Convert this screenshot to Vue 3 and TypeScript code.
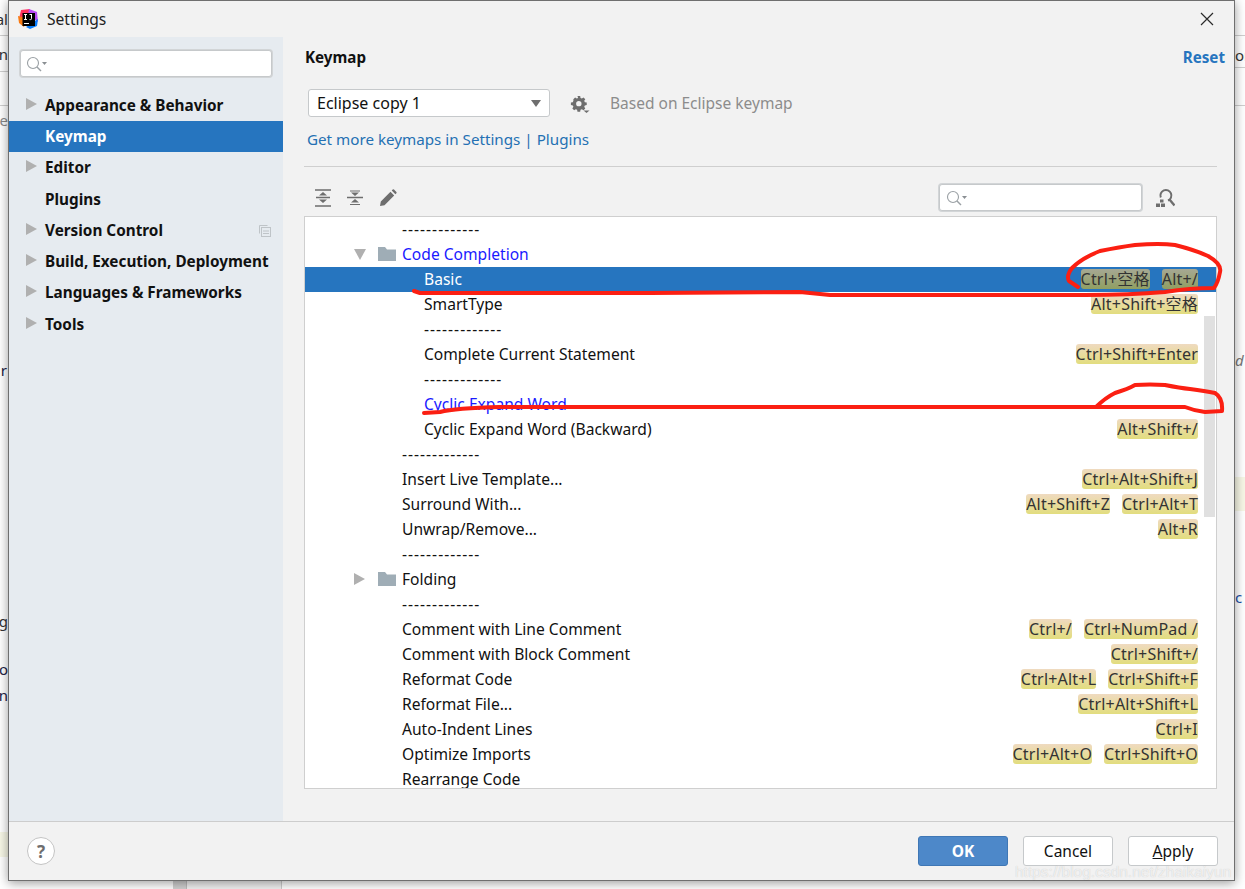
<script setup lang="ts">
interface KeymapRow {
  label: string
  level: 0 | 1 | 2
  keys?: string[]
  selected?: boolean
  blue?: boolean
  folder?: 'open' | 'closed'
}

const sep = '-------------'

const navItems = [
  { label: 'Appearance & Behavior', arrow: true },
  { label: 'Keymap', selected: true },
  { label: 'Editor', arrow: true },
  { label: 'Plugins' },
  { label: 'Version Control', arrow: true, copy: true },
  { label: 'Build, Execution, Deployment', arrow: true },
  { label: 'Languages & Frameworks', arrow: true },
  { label: 'Tools', arrow: true },
]

const rows: KeymapRow[] = [
  { label: sep, level: 0 },
  { label: 'Code Completion', level: 0, blue: true, folder: 'open' },
  { label: 'Basic', level: 1, selected: true, keys: ['Ctrl+空格', 'Alt+/'] },
  { label: 'SmartType', level: 1, keys: ['Alt+Shift+空格'] },
  { label: sep, level: 1 },
  { label: 'Complete Current Statement', level: 1, keys: ['Ctrl+Shift+Enter'] },
  { label: sep, level: 1 },
  { label: 'Cyclic Expand Word', level: 1, blue: true },
  { label: 'Cyclic Expand Word (Backward)', level: 1, keys: ['Alt+Shift+/'] },
  { label: sep, level: 0 },
  { label: 'Insert Live Template...', level: 0, keys: ['Ctrl+Alt+Shift+J'] },
  { label: 'Surround With...', level: 0, keys: ['Alt+Shift+Z', 'Ctrl+Alt+T'] },
  { label: 'Unwrap/Remove...', level: 0, keys: ['Alt+R'] },
  { label: sep, level: 0 },
  { label: 'Folding', level: 0, folder: 'closed' },
  { label: sep, level: 0 },
  { label: 'Comment with Line Comment', level: 0, keys: ['Ctrl+/', 'Ctrl+NumPad /'] },
  { label: 'Comment with Block Comment', level: 0, keys: ['Ctrl+Shift+/'] },
  { label: 'Reformat Code', level: 0, keys: ['Ctrl+Alt+L', 'Ctrl+Shift+F'] },
  { label: 'Reformat File...', level: 0, keys: ['Ctrl+Alt+Shift+L'] },
  { label: 'Auto-Indent Lines', level: 0, keys: ['Ctrl+I'] },
  { label: 'Optimize Imports', level: 0, keys: ['Ctrl+Alt+O', 'Ctrl+Shift+O'] },
  { label: 'Rearrange Code', level: 0 },
]
</script>

<template>
  <div class="desktop">
    <i class="bg-line bl1"></i>
    <i class="bg-line bl2"></i>
    <i class="bg-line bl3"></i>
    <i class="bg-line br1"></i>
    <i class="bg-line br2"></i>
    <i class="bg-line br3"></i>
    <i class="bg-yellow by-left"></i>
    <i class="bg-yellow by-right"></i>
    <i class="bg-bottom"></i>
    <i class="bg-bottom-pane"></i>

    <span class="peek peek-al">al</span>
    <span class="peek peek-n">n</span>
    <span class="peek peek-le">le</span>
    <span class="peek peek-r">r</span>
    <span class="peek peek-g">g</span>
    <span class="peek peek-o">o</span>
    <span class="peek peek-on">on</span>
    <span class="peek peek-or">or</span>
    <span class="peek peek-d">d</span>
    <span class="peek peek-c">c</span>

    <section class="dialog">
      <header class="titlebar">
        <svg class="logo" width="20" height="20" viewBox="0 0 20 20">
          <path d="M3 1 L12 0 L10 8 L1 10Z" fill="#fe315d" />
          <path d="M0 7 L8 9 L6 18 L1 14Z" fill="#f97a12" />
          <path d="M11 0 L19 3 L20 13 L10 6Z" fill="#b74af7" />
          <path d="M8 18 L20 10 L19 17 L12 20Z" fill="#087cfa" />
          <rect x="4.500" y="4" width="12.500" height="13" fill="#000" />
          <rect x="6" y="14" width="5" height="1" fill="#fff" />
          <path d="M6 5.500h3M7.500 5.500v5M6 10.500h3M11.500 5.500h2.500M13.500 5.500v4.200q0 .9-1 .9h-1" stroke="#fff" stroke-width="1" fill="none" />
        </svg>
        <span class="title">Settings</span>
        <svg class="close" width="14" height="14" viewBox="0 0 14 14">
          <path d="M1 1 L13 13 M13 1 L1 13" stroke="#2b2b2b" stroke-width="1.2" fill="none" />
        </svg>
      </header>

      <div class="body">
        <aside class="sidebar">
          <div class="search side-search">
            <svg width="22" height="16" viewBox="0 0 22 16">
              <circle cx="7" cy="7" r="5.5" fill="none" stroke="#9aa0a4" stroke-width="1.1" />
              <path d="M11 11 L15 15" stroke="#9aa0a4" stroke-width="1.5" />
              <path d="M16 6h5l-2.500 3z" fill="#8a8f93" />
            </svg>
          </div>
          <nav class="nav">
            <div v-for="item in navItems" :key="item.label" class="nav-item" :class="{ on: item.selected }">
              <i v-if="item.arrow" class="arrow"></i>
              <span>{{ item.label }}</span>
              <svg v-if="item.copy" class="copy" width="12" height="12" viewBox="0 0 12 12">
                <path d="M.5 8.500V.5h8" fill="none" stroke="#bfc4c8" />
                <rect x="2.500" y="2.500" width="9" height="9" fill="none" stroke="#bfc4c8" />
                <path d="M4 6h6M4 8.500h6" stroke="#bfc4c8" />
              </svg>
            </div>
          </nav>
        </aside>

        <main class="content">
          <div class="heading">
            <h1>Keymap</h1>
            <a class="reset">Reset</a>
          </div>

          <div class="scheme">
            <div class="combo">
              <span>Eclipse copy 1</span>
              <i class="combo-arrow"></i>
            </div>
            <svg class="gear" width="20" height="20" viewBox="0 0 20 20">
              <path fill-rule="evenodd" fill="#6e6e6e" d="M8.300 2h3l.4 2.100 1.500.7 1.800-1.200 2 2-1.200 1.800.7 1.500 2.100.4v2.800l-2.100.4-.7 1.500 1.200 1.800-2 2-1.800-1.200-1.500.7-.4 2.100h-3l-.4-2.100-1.500-.7-1.800 1.200-2-2 1.200-1.800-.7-1.500-2.100-.4V9.300l2.100-.4.7-1.500L3.700 5.600l2-2 1.800 1.200 1.500-.7zM9.800 7.500a3 3 0 1 0 0 6 3 3 0 0 0 0-6z" transform="translate(0 1.200) scale(.9)" />
              <path d="M13.500 17.500h6l-3 2.500z" fill="#6e6e6e" />
            </svg>
            <span class="based">Based on Eclipse keymap</span>
          </div>

          <div class="links">Get more keymaps in Settings | Plugins</div>
          <div class="rule"></div>

          <div class="toolbar">
            <svg width="16" height="18" viewBox="0 0 16 18">
              <path d="M0 1h16M0 17h16M1 8.500h14" stroke="#6e6e6e" stroke-width="1.500" />
              <path d="M8 3l4 3.500H4zM8 14l-4-3.500h8z" fill="#6e6e6e" />
            </svg>
            <svg width="16" height="18" viewBox="0 0 16 18">
              <path d="M0 8.500h16" stroke="#6e6e6e" stroke-width="1.500" />
              <path d="M3 2h10M3 15.500h10" stroke="#6e6e6e" stroke-width="1.200" />
              <path d="M8 7L4 3.500h8zM8 10l4 3.500H4z" fill="#6e6e6e" />
            </svg>
            <svg width="18" height="18" viewBox="0 0 18 18">
              <path d="M1 17l.8-4.500L11.500 2.800l3.700 3.700L5.500 16.200zM12.700 1.600l1-1q.7-.5 1.300 0l2.400 2.400q.5.600 0 1.300l-1 1z" fill="#6e6e6e" />
            </svg>
            <div class="search tree-search">
              <svg width="22" height="16" viewBox="0 0 22 16">
                <circle cx="7" cy="7" r="5.500" fill="none" stroke="#9aa0a4" stroke-width="1.100" />
                <path d="M11 11 L15 15" stroke="#9aa0a4" stroke-width="1.500" />
                <path d="M16 6h5l-2.500 3z" fill="#8a8f93" />
              </svg>
            </div>
            <svg class="find-shortcut" width="20" height="20" viewBox="0 0 20 20">
              <path d="M5.800 9.500A5.500 5.500 0 1 1 13 12.500" fill="none" stroke="#6e6e6e" stroke-width="2" />
              <path d="M14.500 11.500l5 6" stroke="#6e6e6e" stroke-width="2.400" />
              <path d="M5 11.500h3.500v3H5zM1 15.500h4V19H1zM6 15.500h4V19H6z" fill="#6e6e6e" />
            </svg>
          </div>

          <div class="tree">
            <div
              v-for="(row, i) in rows"
              :key="i"
              class="row"
              :class="[`lvl${row.level}`, { sel: row.selected, blue: row.blue }]"
            >
              <template v-if="row.folder">
                <i class="tree-arrow" :class="row.folder"></i>
                <svg class="folder" width="18" height="14" viewBox="0 0 18 14">
                  <path d="M0 0h7l2 2.500h9V14H0z" fill="#9fadb6" />
                </svg>
              </template>
              <span class="label" :class="{ dashes: row.label === sep }">{{ row.label }}</span>
              <span class="keys">
                <kbd v-for="k in row.keys" :key="k">{{ k }}</kbd>
              </span>
            </div>
            <div class="thumb"></div>
          </div>
        </main>
      </div>

      <footer class="footer">
        <div class="help">?</div>
        <div class="buttons">
          <button class="primary">OK</button>
          <button>Cancel</button>
          <button><u>A</u>pply</button>
        </div>
      </footer>
    </section>

    <svg class="scribble" width="1245" height="889" viewBox="0 0 1245 889">
      <g fill="none" stroke="#fb1f12" stroke-width="4" stroke-linejoin="round" stroke-linecap="round">
        <path d="M1078 287 L1069 281 Q1066 276 1072 268 Q1082 258 1100 251 Q1120 247 1135 245 Q1160 243 1175 245 Q1195 250 1208 256 Q1222 264 1220 272 Q1218 283 1214 288 Q1190 288 1165 292 Q1130 295 1085 295 L830 295 L800 292 L650 293 L420 293 L414 291" />
        <path d="M424 413 L440 412 Q455 408 500 407 L680 407 L1096 407 Q1105 398 1115 393 Q1128 389 1135 385 Q1150 384 1165 385 Q1180 388 1190 389 Q1205 391 1215 393 Q1223 398 1222 411 L1205 412 Q1195 411 1185 407 L1096 407" />
      </g>
    </svg>

    <span class="watermark">https://blog.csdn.net/zhaikaiyun</span>
  </div>
</template>

<style>
html, body { margin: 0; padding: 0; }
</style>

<style scoped>
.desktop {
  position: relative;
  width: 1245px;
  height: 889px;
  overflow: hidden;
  background: #fff;
  font-family: "Noto Sans", "Noto Sans CJK SC", sans-serif;
  color: #111;
}
.bg-line { position: absolute; height: 1px; background: #cfcfcf; }
.bl1 { left: 0; width: 8px; top: 35px; }
.bl2 { left: 0; width: 8px; top: 71px; }
.bl3 { left: 0; width: 8px; top: 105px; }
.br1 { left: 1234px; width: 11px; top: 35px; }
.br2 { left: 1234px; width: 11px; top: 67px; }
.br3 { left: 1234px; width: 11px; top: 105px; }
.bg-yellow { position: absolute; background: #f7f7e6; }
.by-left { left: 0; width: 8px; top: 832px; height: 25px; }
.by-right { left: 1234px; width: 11px; top: 477px; height: 34px; }
.bg-bottom { position: absolute; left: 173px; top: 880px; width: 13px; height: 9px; background: #d0d0d0; }
.bg-bottom-pane { position: absolute; left: 186px; top: 880px; width: 94px; height: 9px; background: #f0f0f0; border-left: 1px solid #bbb; border-right: 1px solid #ccc; }
.peek {
  position: absolute;
  font-size: 15px;
  line-height: 18px;
  color: #333;
}
.peek-al { right: 1237px; top: 10px; }
.peek-n { right: 1237px; top: 45px; }
.peek-le { right: 1237px; top: 111px; color: #888; }
.peek-r { right: 1238px; top: 361px; color: #224; }
.peek-g { right: 1237px; top: 612px; }
.peek-o { right: 1237px; top: 660px; color: #224; }
.peek-on { right: 1237px; top: 686px; color: #224; }
.peek-or { left: 1235px; top: 46px; }
.peek-d { left: 1235px; top: 351px; color: #777; font-style: italic; }
.peek-c { left: 1235px; top: 588px; color: #1c4fa8; }

.dialog {
  position: absolute;
  left: 8px;
  top: 0;
  width: 1225px;
  height: 879px;
  display: flex;
  flex-direction: column;
  background: #f2f2f2;
  border: 1px solid #6f6f6f;
  box-shadow: 0 2px 10px rgba(0, 0, 0, 0.4);
}
.titlebar {
  height: 36px;
  display: flex;
  align-items: center;
  padding-left: 9px;
  padding-right: 20px;
}
.title { margin-left: 9px; font-size: 15.6px; color: #222; }
.close { margin-left: auto; }
.body { flex: 1; display: flex; min-height: 0; }

.sidebar { width: 274px; background: #e6ebf0; padding-top: 13px; box-sizing: border-box; }
.search {
  display: flex;
  align-items: center;
  background: #fff;
  border: 1px solid #c6c9cb;
  border-radius: 3px;
  box-sizing: border-box;
  box-shadow: 0 0 0 1px #d2d5d7;
}
.side-search { width: 252px; height: 27px; margin-left: 11px; padding-left: 5px; }
.nav { margin-top: 12.75px; }
.nav-item {
  position: relative;
  height: 31.25px;
  box-sizing: border-box;
  display: flex;
  align-items: center;
  padding-left: 36px;
  padding-bottom: 1px;
  font-size: 15.3px;
  font-weight: 700;
  color: #111;
}
.nav-item.on { background: #2675bf; color: #fff; }
.arrow {
  position: absolute;
  left: 17px;
  top: 8px;
  border-left: 11px solid #b0b0b0;
  border-top: 6px solid transparent;
  border-bottom: 6px solid transparent;
}
.copy { position: absolute; left: 250px; top: 10px; }

.content { flex: 1; padding: 0 17px 0 21px; min-width: 0; display: flex; flex-direction: column; }
.heading { display: flex; justify-content: space-between; height: 38px; align-items: center; margin-top: 1px; margin-right: -8px; padding-left: 1px; }
.heading h1 { margin: 0; font-size: 15.2px; font-weight: 700; color: #111; }
.reset { font-size: 15.2px; font-weight: 700; color: #2675bf; }

.scheme { display: flex; align-items: center; margin-top: 13px; padding-left: 4px; height: 28px; }
.combo {
  width: 242px;
  height: 28px;
  box-sizing: border-box;
  background: #fff;
  border: 1px solid #c6c9cb;
  border-radius: 3px;
  display: flex;
  align-items: center;
  justify-content: space-between;
  padding: 0 8px;
  font-size: 16px;
}
.combo-arrow { border-top: 7px solid #6e6e6e; border-left: 5.5px solid transparent; border-right: 5.5px solid transparent; }
.gear { margin-left: 20px; }
.based { margin-left: 20px; font-size: 15.5px; color: #8c8c8c; }

.links { margin-top: 11px; height: 22px; line-height: 22px; padding-left: 3px; font-size: 15.2px; color: #2470b3; }
.rule { margin-top: 16px; height: 1px; background: #cfcfcf; }

.toolbar {
  height: 49px;
  box-sizing: border-box;
  padding: 16px 42px 4px 11px;
  display: flex;
  align-items: center;
  gap: 16px;
}
.tree-search { width: 203px; height: 27px; margin-left: auto; margin-right: -3px; padding-left: 6px; }

.tree {
  position: relative;
  height: 571px;
  background: #fff;
  border: 1px solid #cfcfcf;
  overflow: hidden;
}
.row {
  position: relative;
  height: 25px;
  box-sizing: border-box;
  padding-bottom: 2px;
  display: flex;
  align-items: center;
  font-size: 15.6px;
  color: #111;
}
.lvl0 { padding-left: 97px; }
.lvl1 { padding-left: 119px; }
.row.sel { background: #2675bf; color: #fff; }
.row.blue .label { color: #1a1aff; }
.label.dashes { letter-spacing: 1px; }
.tree-arrow { position: absolute; }
.tree-arrow.open {
  left: 49px;
  top: 7px;
  border-top: 11px solid #b0b0b0;
  border-left: 6px solid transparent;
  border-right: 6px solid transparent;
}
.tree-arrow.closed {
  left: 49px;
  top: 6px;
  border-left: 11px solid #b0b0b0;
  border-top: 6px solid transparent;
  border-bottom: 6px solid transparent;
}
.folder { position: absolute; left: 73px; top: 5px; }
.keys {
  margin-left: auto;
  margin-right: 18px;
  display: flex;
  gap: 12px;
}
kbd {
  font-family: inherit;
  font-size: 16px;
  letter-spacing: 0.2px;
  line-height: 20px;
  height: 20px;
  color: #333;
  border-radius: 3px;
  background: linear-gradient(#efdac0, #e2dd7e);
}
.row.sel kbd { background: linear-gradient(#a6a893, #909f62); color: #333; }
.thumb {
  position: absolute;
  right: 1px;
  top: 99px;
  width: 11px;
  height: 201px;
  background: #e0e0e0;
  box-shadow: 0 0 0 1px #fff;
}

.footer {
  height: 58px;
  border-top: 1px solid #cdcdcd;
  display: flex;
  align-items: center;
  justify-content: space-between;
  padding: 0 16px 0 18px;
}
.help {
  width: 28px;
  height: 28px;
  box-sizing: border-box;
  border: 1px solid #c4c4c4;
  border-radius: 50%;
  background: #fff;
  display: flex;
  align-items: center;
  justify-content: center;
  font-size: 17px;
  font-weight: 700;
  color: #6e6e6e;
}
.buttons { display: flex; gap: 15px; }
button {
  width: 90px;
  height: 30px;
  box-sizing: border-box;
  background: #fff;
  border: 1px solid #c6c9cb;
  border-radius: 3px;
  font: 15.5px "Noto Sans", sans-serif;
  color: #111;
  padding: 0;
}
button.primary { background: #4d88c9; border-color: #3f77b5; color: #fff; font-weight: 700; }

.scribble { position: absolute; left: 0; top: 0; pointer-events: none; }
.watermark {
  position: absolute;
  left: 1015px;
  top: 861px;
  font: 15.5px/22px "Liberation Sans", sans-serif;
  color: rgba(255, 255, 255, 0.7);
  text-shadow: 0 0 1px rgba(0, 0, 0, 0.2);
  white-space: nowrap;
}
</style>
